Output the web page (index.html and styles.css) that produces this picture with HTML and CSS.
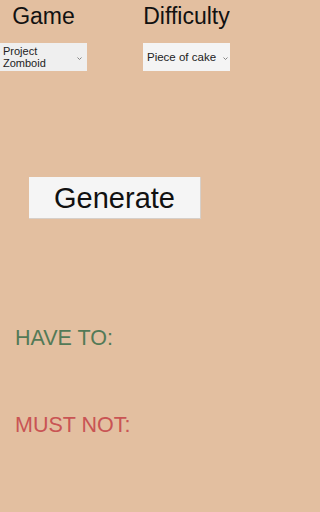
FILE: index.html
```html
<!DOCTYPE html>
<html>
<head>
<meta charset="utf-8">
<link rel="stylesheet" href="styles.css">
</head>
<body>
<div class="app">
  <div class="top">
    <div class="col col-left">
      <div class="title">Game</div>
      <div class="select select-game">
        <span class="sel-text">Project<br>Zomboid</span>
        <svg class="chev" width="5" height="3" viewBox="0 0 5 3"><path d="M0.5 0.5 L2.5 2.5 L4.5 0.5" fill="none" stroke="#777" stroke-width="0.9"/></svg>
      </div>
    </div>
    <div class="col col-right">
      <div class="title">Difficulty</div>
      <div class="select select-diff">
        <span class="sel-text">Piece of cake</span>
        <svg class="chev" width="5" height="3" viewBox="0 0 5 3"><path d="M0.5 0.5 L2.5 2.5 L4.5 0.5" fill="none" stroke="#777" stroke-width="0.9"/></svg>
      </div>
    </div>
  </div>
  <div class="gen-wrap">
    <div class="gen-btn">Generate</div>
  </div>
  <div class="label have">HAVE TO:</div>
  <div class="label mustnot">MUST NOT:</div>
</div>
</body>
</html>
```
FILE: styles.css
```css
html, body {
  margin: 0;
  padding: 0;
  background: #e3bfa0;
}
body {
  width: 230px;
  height: 512px;
  overflow: hidden;
  font-family: "Liberation Sans", Arial, sans-serif;
  color: #111;
}
.app {
  display: flex;
  flex-direction: column;
}
.top {
  display: flex;
  justify-content: space-between;
  padding-top: 5px;
}
.col {
  display: flex;
  flex-direction: column;
  align-items: center;
}
.col-left { width: 87px; }
.col-right { width: 87px; }
.title {
  font-size: 23px;
  line-height: 23px;
  height: 23px;
  color: #111;
  white-space: nowrap;
}
.select {
  margin-top: 15px;
  width: 87px;
  height: 28px;
  box-sizing: border-box;
  background: #efefef;
  display: flex;
  align-items: center;
  justify-content: space-between;
  padding: 0 5px 0 3px;
  font-size: 11.5px;
  color: #222;
}
.select-diff {
  background: #f4f4f4;
  padding-left: 4px;
  padding-right: 2px;
}
.select-game .sel-text {
  font-size: 11px;
  line-height: 12px;
}
.chev {
  display: block;
  margin-top: 2px;
  flex-shrink: 0;
}
.gen-wrap {
  display: flex;
  justify-content: center;
  margin-top: 106px;
}
.gen-btn {
  width: 172px;
  height: 42px;
  box-sizing: border-box;
  background: #f5f5f5;
  border-right: 1px solid #d6cfc9;
  border-bottom: 1px solid #d6cfc9;
  display: flex;
  align-items: center;
  justify-content: center;
  font-size: 29px;
  color: #111;
  padding-top: 1px;
}
.label {
  font-size: 21.5px;
  line-height: 22px;
  padding-left: 15px;
}
.have {
  margin-top: 108px;
  color: #537a57;
}
.mustnot {
  margin-top: 65px;
  color: #c95454;
}
```
